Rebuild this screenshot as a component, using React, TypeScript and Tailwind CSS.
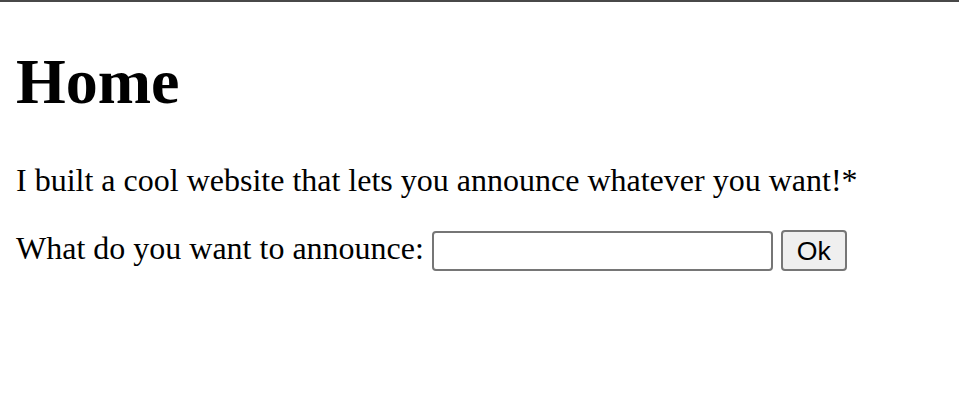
export default function App() {
  return (
    <div className="min-h-[420px] bg-white text-black [font-family:'Liberation_Serif','Times_New_Roman',serif]">
      <div className="h-[2px] bg-[#484848]" />
      <div className="px-4 pt-[43px]">
        <h1 className="m-0 text-[64px] font-bold leading-[73.6px]">Home</h1>
        <p className="mt-[43px] text-[32px] leading-[36.8px]">
          I built a cool website that lets you announce whatever you want!*
        </p>
        <p className="mt-8 text-[32px] leading-[36.8px]">
          What do you want to announce:{' '}
          <input
            type="text"
            className="inline-block h-[40px] w-[341px] rounded-[4px] border-2 border-[#767676] bg-white px-1 align-baseline text-[26.67px] [font-family:'Liberation_Sans',Arial,sans-serif] outline-none"
          />{' '}
          <button className="inline-block h-[41px] w-[66px] rounded-[4px] border-2 border-[#767676] bg-[#efefef] align-baseline text-[26.67px] leading-none text-black [font-family:'Liberation_Sans',Arial,sans-serif]">
            Ok
          </button>
        </p>
      </div>
    </div>
  );
}
